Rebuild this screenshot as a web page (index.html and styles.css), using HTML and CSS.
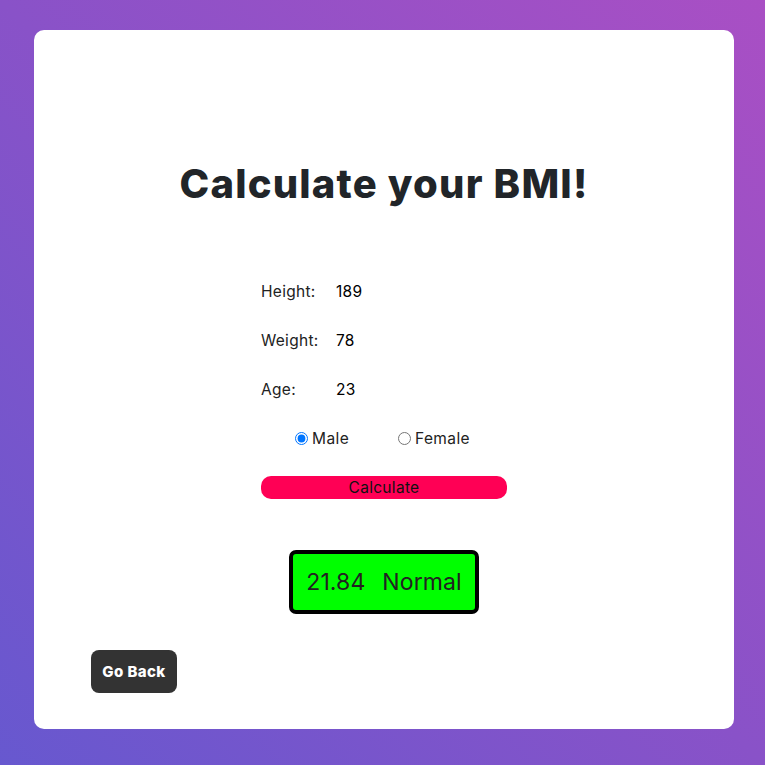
FILE: index.html
```html
<!DOCTYPE html>
<html>
<head>
<meta charset="utf-8">
<link rel="stylesheet" href="styles.css">
</head>
<body>
<div class="card">
  <h1 class="title">Calculate your BMI!</h1>
  <form class="form">
    <div class="row"><span class="label">Height:</span><span class="value">189</span></div>
    <div class="row"><span class="label">Weight:</span><span class="value">78</span></div>
    <div class="row"><span class="label">Age:</span><span class="value">23</span></div>
    <div class="radios">
      <label class="radio"><input type="radio" name="g" checked>Male</label>
      <label class="radio"><input type="radio" name="g">Female</label>
    </div>
    <button type="button" class="calc">Calculate</button>
  </form>
  <div class="result-wrap">
    <div class="result"><span>21.84</span><span>Normal</span></div>
  </div>
  <div class="back-wrap"><button type="button" class="back">Go Back</button></div>
</div>
</body>
</html>
```
FILE: styles.css
```css
html, body { margin: 0; padding: 0; }
body {
  width: 765px;
  height: 765px;
  background: linear-gradient(45deg, #6758cf 0%, #8952c8 50%, #a94fc4 100%);
  font-family: "Inter", "Liberation Sans", sans-serif;
  color: #212529;
  padding: 30px 0 0 34px;
  box-sizing: border-box;
}
.card {
  width: 700px;
  height: 699px;
  background: #fff;
  border-radius: 10px;
  box-sizing: border-box;
  padding-top: 128px;
  display: flex;
  flex-direction: column;
  align-items: center;
}
.title {
  margin: 0;
  font-size: 40px;
  line-height: 52px;
  font-weight: 800;
  letter-spacing: 1.2px;
  color: #212529;
}
.form {
  margin-top: 57px;
  width: 246px;
  display: flex;
  flex-direction: column;
}
.row {
  display: grid;
  grid-template-columns: 75px 1fr;
  height: 49px;
  align-items: center;
  font-size: 15.5px;
  letter-spacing: 0.3px;
}
.label { color: #222; }
.value { color: #000; }
.radios {
  display: flex;
  height: 49px;
  align-items: center;
  padding-left: 34px;
  font-size: 15.5px;
  letter-spacing: 0.4px;
}
.radio {
  display: flex;
  align-items: center;
  width: 103px;
  color: #222;
}
.radio input { margin: 0 4px 0 0; width: 13px; height: 13px; }
.calc {
  margin-top: 13px;
  height: 23px;
  border: none;
  border-radius: 10px;
  background: #ff0055;
  color: #111;
  font-family: inherit;
  font-size: 15.5px;
  letter-spacing: 0.3px;
  padding: 0;
}
.result-wrap {
  margin-top: 51px;
  display: flex;
  justify-content: center;
}
.result {
  width: 190px;
  height: 64px;
  box-sizing: border-box;
  border: 4px solid #000;
  border-radius: 7px;
  background: #00ff00;
  display: flex;
  align-items: center;
  justify-content: center;
  gap: 17px;
  font-size: 23px;
  letter-spacing: 0.1px;
  color: #222;
}
.back-wrap {
  align-self: flex-start;
  margin-top: 36px;
  margin-left: 57px;
}
.back {
  width: 86px;
  height: 43px;
  border: none;
  border-radius: 8px;
  background: #333;
  color: #fff;
  font-family: "Inter", "Liberation Sans", sans-serif;
  font-weight: 800;
  font-size: 15px;
  letter-spacing: 0.4px;
  padding: 0;
}
```
